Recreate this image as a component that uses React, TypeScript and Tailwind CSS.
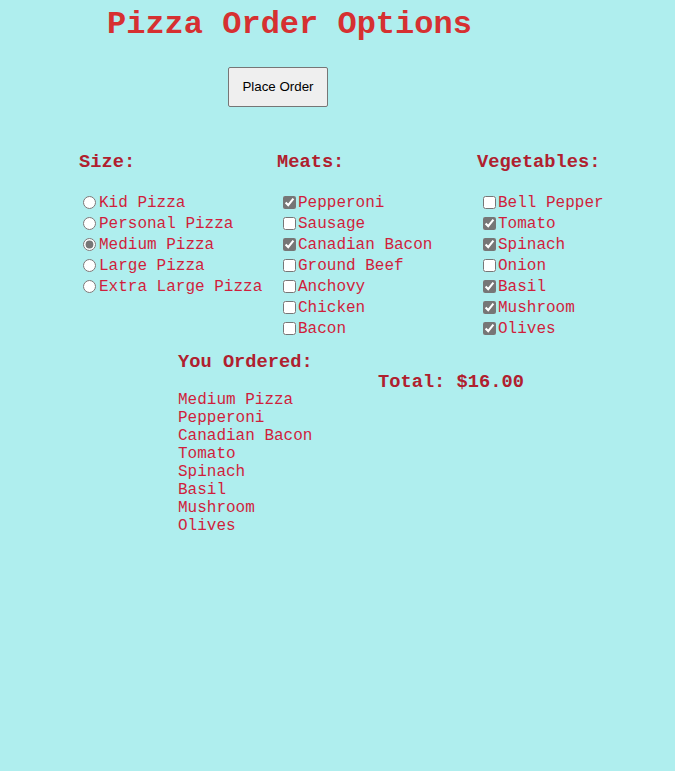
import React from 'react';

const SIZES = ['Kid Pizza', 'Personal Pizza', 'Medium Pizza', 'Large Pizza', 'Extra Large Pizza'];
const MEATS = ['Pepperoni', 'Sausage', 'Canadian Bacon', 'Ground Beef', 'Anchovy', 'Chicken', 'Bacon'];
const VEGGIES = ['Bell Pepper', 'Tomato', 'Spinach', 'Onion', 'Basil', 'Mushroom', 'Olives'];

const chosenSize = 'Medium Pizza';
const chosenMeats = ['Pepperoni', 'Canadian Bacon'];
const chosenVeggies = ['Tomato', 'Spinach', 'Basil', 'Mushroom', 'Olives'];

const Heading = ({ children }: { children: React.ReactNode }) => (
  <h3 className="text-[18.72px] font-bold text-[#b0202e] leading-[22px]">{children}</h3>
);

const OptionRow = ({ type, name, label, checked }: { type: 'radio' | 'checkbox'; name: string; label: string; checked: boolean }) => (
  <label className="flex items-center h-[21px] whitespace-nowrap">
    <input
      type={type}
      name={name}
      defaultChecked={checked}
      className={
        type === 'radio'
          ? 'w-[13px] h-[13px] ml-[4px] mr-[3px] accent-[#767676]'
          : 'w-[13px] h-[13px] ml-[6px] mr-[2px] accent-[#767676]'
      }
    />
    <span className="text-[16px] text-[#d01e3c]">{label}</span>
  </label>
);

export default function App() {
  const ordered = [chosenSize, ...chosenMeats, ...chosenVeggies];
  return (
    <div className="min-h-screen bg-[#afeeee] font-['Liberation_Mono','Courier_New',monospace]">
      <h1 className="pl-[107px] pt-[7px] text-[32px] leading-[36px] font-bold text-[#d63031]">Pizza Order Options</h1>

      <div className="pl-[228px] pt-[24px]">
        <button className="w-[100px] h-[40px] bg-[#efefef] border border-[#767676] rounded-[2px] text-[13.33px] text-black font-['Liberation_Sans',Arial,sans-serif]">
          Place Order
        </button>
      </div>

      <div className="pl-[79px] pt-[44px] grid grid-cols-[198px_200px_200px]">
        <div>
          <Heading>Size:</Heading>
          <div className="mt-[19px]">
            {SIZES.map((s) => (
              <OptionRow key={s} type="radio" name="size" label={s} checked={s === chosenSize} />
            ))}
          </div>
        </div>
        <div>
          <Heading>Meats:</Heading>
          <div className="mt-[19px]">
            {MEATS.map((m) => (
              <OptionRow key={m} type="checkbox" name="meat" label={m} checked={chosenMeats.includes(m)} />
            ))}
          </div>
        </div>
        <div>
          <Heading>Vegetables:</Heading>
          <div className="mt-[19px]">
            {VEGGIES.map((v) => (
              <OptionRow key={v} type="checkbox" name="veg" label={v} checked={chosenVeggies.includes(v)} />
            ))}
          </div>
        </div>
      </div>

      <div className="pl-[178px] pt-[12px] grid grid-cols-[200px_200px]">
        <div>
          <Heading>You Ordered:</Heading>
          <ul className="mt-[18px]">
            {ordered.map((o) => (
              <li key={o} className="text-[16px] leading-[18px] text-[#d01e3c]">{o}</li>
            ))}
          </ul>
        </div>
        <div className="pt-[20px]">
          <Heading>Total: $16.00</Heading>
        </div>
      </div>
    </div>
  );
}
